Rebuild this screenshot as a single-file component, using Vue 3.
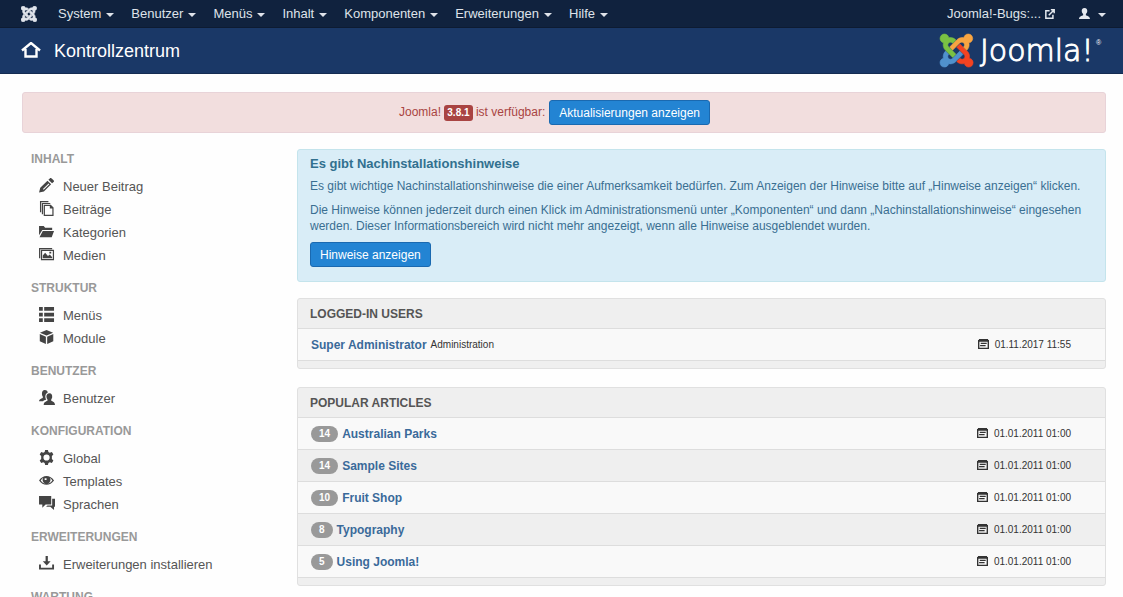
<script setup>
const menu = ['System', 'Benutzer', 'Menüs', 'Inhalt', 'Komponenten', 'Erweiterungen', 'Hilfe']

const groups = [
  {
    title: 'Inhalt',
    items: [
      { label: 'Neuer Beitrag', icon: 'pencil' },
      { label: 'Beiträge', icon: 'stack' },
      { label: 'Kategorien', icon: 'folder' },
      { label: 'Medien', icon: 'pictures' }
    ]
  },
  {
    title: 'Struktur',
    items: [
      { label: 'Menüs', icon: 'list' },
      { label: 'Module', icon: 'cube' }
    ]
  },
  { title: 'Benutzer', items: [{ label: 'Benutzer', icon: 'users' }] },
  {
    title: 'Konfiguration',
    items: [
      { label: 'Global', icon: 'cog' },
      { label: 'Templates', icon: 'eye' },
      { label: 'Sprachen', icon: 'comments' }
    ]
  },
  { title: 'Erweiterungen', items: [{ label: 'Erweiterungen installieren', icon: 'download' }] },
  { title: 'Wartung', items: [] }
]

const icons = {
  pencil: 'M0 15.500l1.300-5L9 2.800l3.900 3.900-7.700 7.600zM10 1.800L11.500.4c.6-.6 1.400-.5 2 0l2 2c.6.6.6 1.300 0 1.900L13.900 5.700zM4.200 11.800l.8.8 6-6-.8-.8z',
  stack: 'M1 0h9v1.300H2.300V12H1zM3 2h9v1.300H4.300V14H3zM5 4h7.500l3 3v9H5zM6.300 5.300v9.400h7.900V8H11.500V5.300z',
  folder: 'M0 2h5l1.500 2H14v2.500H3.500L0 12zM4 7.500h12L13.500 14H0.500z',
  pictures: 'M0 1h14v1.300H1.300V12H0zM2 3h14v11H2zM3.300 4.300v8.400h11.400V4.300zM4 12V9l2.500-3 3 3.500L11.500 8l2.500 3v1zM11 5h2v2h-2z',
  list: 'M0 0h4v4H0zM5.500 0H16v4H5.500zM0 6h4v4H0zM5.500 6H16v4H5.500zM0 12h4v4H0zM5.500 12H16v4H5.500z',
  cube: 'M8 0l7 2.800L8 5.800 1 2.800zM.8 4.300l6.500 2.800V15L.8 12zM15.200 4.300L8.700 7.100V15l6.500-3z',
  users: 'M6 0c2.300 0 3.200 1.200 3.200 2.800C7 3.600 6.300 6 6.900 8.500c.2.800.5 1.200.8 1.600C6 10.800 4.800 11.200 4.200 12H0c0-2.500 2-2.600 4-3.600V7C2.500 5 2.800 0 6 0zM11 3.500c2.500 0 3.300 2 3 4.500-.2 1-.6 1.500-1 2v1.500c1.500 1 4 1.200 4 4.500H5c0-3.300 2.500-3.500 4-4.500V10C7.200 8 7.500 3.500 11 3.500z',
  cog: 'M6.500 0h3l.5 2.200 1.500.8 2.200-.8 1.600 2.700L13.700 6.500v3l1.600 1.600-1.600 2.700-2.200-.8-1.500.8-.5 2.200h-3L6 13.800 4.500 13l-2.200.8L.7 11.100l1.600-1.600v-3L.7 4.900l1.600-2.700 2.200.8L6 2.200zM8 4.700a3.300 3.300 0 1 0 0 6.600 3.300 3.300 0 0 0 0-6.600z',
  eye: 'M0 8c4-6.500 12-6.500 16 0-4 6-12 6-16 0zM1.800 8c1.500 2 3 3 5 3.200A4 4 0 0 1 4.500 5C3.400 5.700 2.500 6.700 1.800 8zM14.200 8c-.7-1.300-1.600-2.300-2.700-3a4 4 0 0 1-2.300 6.200c2-.2 3.500-1.200 5-3.200zM6 5.500v2h2v-2z',
  comments: 'M0 0h13v9H7l-3.500 3.500V9H0zM14 3h3.500v8.500H16V15l-4-3.500H7.500L9 10h5z',
  download: 'M7 0h2.400v5.500h3L8.200 10.200 4 5.500h3zM0 9h2v3.500h12V9h2v5.500H0z'
}

const articles = [
  { hits: 14, title: 'Australian Parks' },
  { hits: 14, title: 'Sample Sites' },
  { hits: 10, title: 'Fruit Shop' },
  { hits: 8, title: 'Typography' },
  { hits: 5, title: 'Using Joomla!' }
]

const calendar = 'M1 0h10v1h1v10H0V1h1zM1.500 3v6.500h9V3zM3 4.200h6.500v1.200H3zM2.300 6.600h6v1.200h-6z'

const emblem = [
  { color: '#5091cd', d: 'M16.719 14.759L14.22 17.26l-2.37 2.37-.462.466c-1.368 1.365-3.297 1.83-5.047 1.397-.327 1.424-1.604 2.49-3.13 2.49C1.438 23.983 0 22.547 0 20.772c0-1.518 1.055-2.789 2.469-3.123-.446-1.76.016-3.705 1.396-5.08l.179-.18 2.37 2.37-.184.181c-.769.779-.769 2.024 0 2.789.771.78 2.022.78 2.787 0l.465-.465 2.367-2.371 2.502-2.506z' },
  { color: '#f44321', d: 'M17.643 21.411c-1.822.563-3.885.12-5.328-1.318l-.18-.185 2.365-2.369.18.184c.771.768 2.018.765 2.787 0 .765-.765.769-2.01-.004-2.781l-.466-.465-2.365-2.37-2.502-2.503 2.370-2.369 2.499 2.505 2.367 2.370.464.464c1.365 1.360 1.846 3.278 1.411 5.021 1.560.224 2.759 1.560 2.759 3.180 0 1.784-1.439 3.210-3.209 3.210-1.545 0-2.851-1.096-3.135-2.565z' },
  { color: '#f9a541', d: 'M6.975 9.461l2.508-2.505 2.370-2.369.462-.461c1.366-1.365 3.270-1.844 5.007-1.426C17.490 1.124 18.855 0 20.490 0c1.770 0 3.209 1.439 3.209 3.210 0 1.631-1.216 2.978-2.790 3.186.519 1.799.068 3.816-1.350 5.234l-.182.184-2.369-2.369.184-.184c.769-.77.769-2.016 0-2.783-.766-.766-2.011-.768-2.781.003l-.462.461-2.370 2.369-2.505 2.502z' },
  { color: '#7ac143', d: 'M4.322 12.108l-.461-.462C2.430 10.215 1.986 8.170 2.529 6.358 1.100 6.029.03 4.754.03 3.224.03 1.454 1.470.015 3.240.015c1.596 0 2.920 1.166 3.170 2.691 1.730-.405 3.626.065 4.979 1.415l.184.185-2.370 2.370-.183-.181c-.77-.765-2.016-.765-2.785 0-.771.781-.77 2.025-.005 2.790l.465.466 2.370 2.369 2.505 2.505-2.367 2.370-2.510-2.505z' }
]
</script>

<template>
  <div class="page">
    <nav class="navbar" aria-label="Hauptmenü">
      <a href="#" class="brand" aria-label="Joomla">
        <svg viewBox="0 0 24 24" width="16" height="16" fill="#dfe3ea" stroke="#dfe3ea" stroke-width="0.800">
          <path v-for="e in emblem" :key="e.color" :d="e.d" />
        </svg>
      </a>
      <ul class="menu">
        <li v-for="m in menu" :key="m"><a href="#">{{ m }}<i class="caret"></i></a></li>
      </ul>
      <a href="#" class="site">Joomla!-Bugs:...
        <svg viewBox="0 0 12 12" width="10" height="10" fill="none" stroke="#e4e8ee" stroke-width="1.800">
          <path d="M5.500 2H1v9h8.500V7M4.500 7.500L10.500 1.500M7 1h4v4" />
        </svg>
      </a>
      <a href="#" class="account" aria-label="Benutzerkonto">
        <svg viewBox="0 0 12 12" width="11" height="11" fill="#e4e8ee">
          <path d="M6 0c2.300 0 3.200 1.500 3 3.500C8.900 5 8 6 7.500 6.500v1.300C9 8.800 12 8.800 12 12H0c0-3.200 3-3.200 4.500-4.200V6.500C4 6 3.100 5 3 3.500 2.800 1.500 3.700 0 6 0z" />
        </svg>
        <i class="caret"></i>
      </a>
    </nav>

    <header class="header">
      <svg class="home" viewBox="0 0 20 18" width="20" height="18" fill="none" stroke="#fff" stroke-width="2.400">
        <path d="M1 8.500l9-7.500 9 7.500M4.500 7v7.500h11V7" />
      </svg>
      <h1>Kontrollzentrum</h1>
      <svg class="logo" role="img" aria-label="Joomla!" viewBox="0 0 163 36" width="163" height="36">
        <g transform="translate(0 1) scale(1.380)">
          <path v-for="e in emblem" :key="e.color" :d="e.d" :fill="e.color" :stroke="e.color" stroke-width="0.400" />
        </g>
        <text x="40" y="28" class="wordmark" fill="#fff">Joomla!</text>
        <text x="156" y="12" class="reg" fill="#fff">®</text>
      </svg>
    </header>

    <div class="alert update">
      <span>Joomla! <b class="version">3.8.1</b> ist verfügbar:</span>
      <button type="button" class="btn">Aktualisierungen anzeigen</button>
    </div>

    <div class="columns">
      <aside class="sidebar">
        <section v-for="g in groups" :key="g.title">
          <h2>{{ g.title }}</h2>
          <ul>
            <li v-for="i in g.items" :key="i.label">
              <a href="#">
                <svg viewBox="0 0 17 16" width="16" height="15" fill="#444" fill-rule="evenodd"><path :d="icons[i.icon]" /></svg>
                <span>{{ i.label }}</span>
              </a>
            </li>
          </ul>
        </section>
      </aside>

      <main class="content">
        <section class="alert notice">
          <h2>Es gibt Nachinstallationshinweise</h2>
          <p>Es gibt wichtige Nachinstallationshinweise die einer Aufmerksamkeit bedürfen. Zum Anzeigen der Hinweise bitte auf „Hinweise anzeigen“ klicken.</p>
          <p>Die Hinweise können jederzeit durch einen Klick im Administrationsmenü unter „Komponenten“ und dann „Nachinstallationshinweise“ eingesehen werden. Dieser Informationsbereich wird nicht mehr angezeigt, wenn alle Hinweise ausgeblendet wurden.</p>
          <button type="button" class="btn">Hinweise anzeigen</button>
        </section>

        <section class="well">
          <h2>Logged-in Users</h2>
          <div class="row">
            <a href="#">Super Administrator</a>
            <small class="where">Administration</small>
            <span class="date">
              <svg viewBox="0 0 12 12" width="11" height="11" fill="#333" fill-rule="evenodd"><path :d="calendar" /></svg>
              <small>01.11.2017 11:55</small>
            </span>
          </div>
        </section>

        <section class="well">
          <h2>Popular Articles</h2>
          <div v-for="a in articles" :key="a.title" class="row">
            <span class="badge">{{ a.hits }}</span>
            <a href="#">{{ a.title }}</a>
            <span class="date">
              <svg viewBox="0 0 12 12" width="11" height="11" fill="#333" fill-rule="evenodd"><path :d="calendar" /></svg>
              <small>01.01.2011 01:00</small>
            </span>
          </div>
        </section>
      </main>
    </div>
  </div>
</template>

<style>
body {
  margin: 0;
  background: #fefefe;
}
</style>

<style scoped>
.page {
  height: 100vh;
  overflow: hidden;
  font: 12px/16px "Liberation Sans", Arial, sans-serif;
  color: #333;
}
* { box-sizing: border-box; }
a { text-decoration: none; color: inherit; }
ul { list-style: none; margin: 0; padding: 0; }
h1, h2, p { margin: 0; }
svg { flex: none; }

.navbar {
  display: flex;
  align-items: center;
  height: 28px;
  padding: 0 17px 0 21px;
  background: #10223e;
  border-bottom: 1px solid #0d1b32;
  color: #dfe3ea;
  font-size: 13px;
}
.brand { display: flex; margin-right: 21px; }
.menu { display: flex; gap: 17px; flex: 1; }
.menu a { display: flex; align-items: center; }
.caret {
  border: solid transparent;
  border-width: 4px 4px 0;
  border-top-color: #dfe3ea;
  margin: 2px 0 0 5px;
}
.site { display: flex; align-items: center; gap: 4px; }
.account { display: flex; align-items: center; gap: 3px; margin-left: 24px; }

.header {
  display: flex;
  align-items: center;
  height: 46px;
  padding: 0 20px 0 21px;
  background: #1a3867;
  border-bottom: 1px solid #142c52;
  color: #fff;
}
.header h1 {
  flex: 1;
  margin-left: 13px;
  font-size: 18px;
  line-height: 24px;
  font-weight: 400;
}
.logo { overflow: visible; }
.wordmark {
  font: 200 30px "DejaVu Sans", sans-serif;
  stroke: #fff;
  stroke-width: 1px;
}
.reg { font: 7px "Liberation Sans", sans-serif; }

.alert { border: 1px solid; border-radius: 3px; }
.update {
  display: flex;
  align-items: center;
  justify-content: center;
  gap: 4px;
  margin: 18px 17px 16px 22px;
  padding: 7px 26px 7px 7px;
  background: #f2dede;
  border-color: #e8d3d8;
  color: #a94442;
}
.version {
  display: inline-block;
  padding: 0 3px;
  border-radius: 3px;
  background: #a94442;
  color: #fff;
  font-size: 10px;
}
.btn {
  height: 25px;
  padding: 0 9px;
  border: 1px solid #1a69b0;
  border-radius: 3px;
  background: #2384d3;
  color: #fff;
  font: 12px/16px "Liberation Sans", Arial, sans-serif;
}

.columns {
  display: grid;
  grid-template-columns: 266px 1fr;
  padding: 0 17px 0 31px;
}
.sidebar h2 {
  color: #999;
  font-size: 12px;
  line-height: 20px;
  text-transform: uppercase;
}
.sidebar ul { padding: 6px 0 11px 8px; }
.sidebar a {
  display: flex;
  align-items: center;
  gap: 8px;
  height: 23px;
  color: #555;
  font-size: 13px;
}
.sidebar a svg { margin-bottom: 3px; }

.notice {
  padding: 6px 12px 14px;
  background: #d9edf7;
  border-color: #c4e4ec;
  color: #3a6f92;
}
.notice h2 { font-size: 13px; line-height: 16px; color: #31708f; }
.notice p { margin: 6px 0 8px; }

.well {
  margin-top: 18px;
  padding-bottom: 7px;
  border: 1px solid #e0e0e0;
  border-radius: 3px;
  background: #efefef;
}
.notice + .well { margin-top: 16px; }
.well h2 {
  padding: 1px 12px 0;
  font-size: 12px;
  line-height: 28px;
  color: #555;
  text-transform: uppercase;
}
.row {
  display: flex;
  align-items: center;
  gap: 4px;
  height: 32px;
  padding: 0 34px 0 13px;
  border-top: 1px solid #ddd;
  background: #f9f9f9;
}
.row:last-child { border-bottom: 1px solid #ddd; height: 33px; }
.row:nth-child(odd) { background: #efefef; }
.row a { color: #3a6a9a; font-weight: 700; }
.row small { font-size: 10px; }
.badge {
  padding: 0 8px;
  border-radius: 8px;
  background: #999;
  color: #fff;
  font-size: 10px;
  font-weight: 700;
}
.date { display: flex; align-items: center; gap: 6px; margin-left: auto; }
</style>
